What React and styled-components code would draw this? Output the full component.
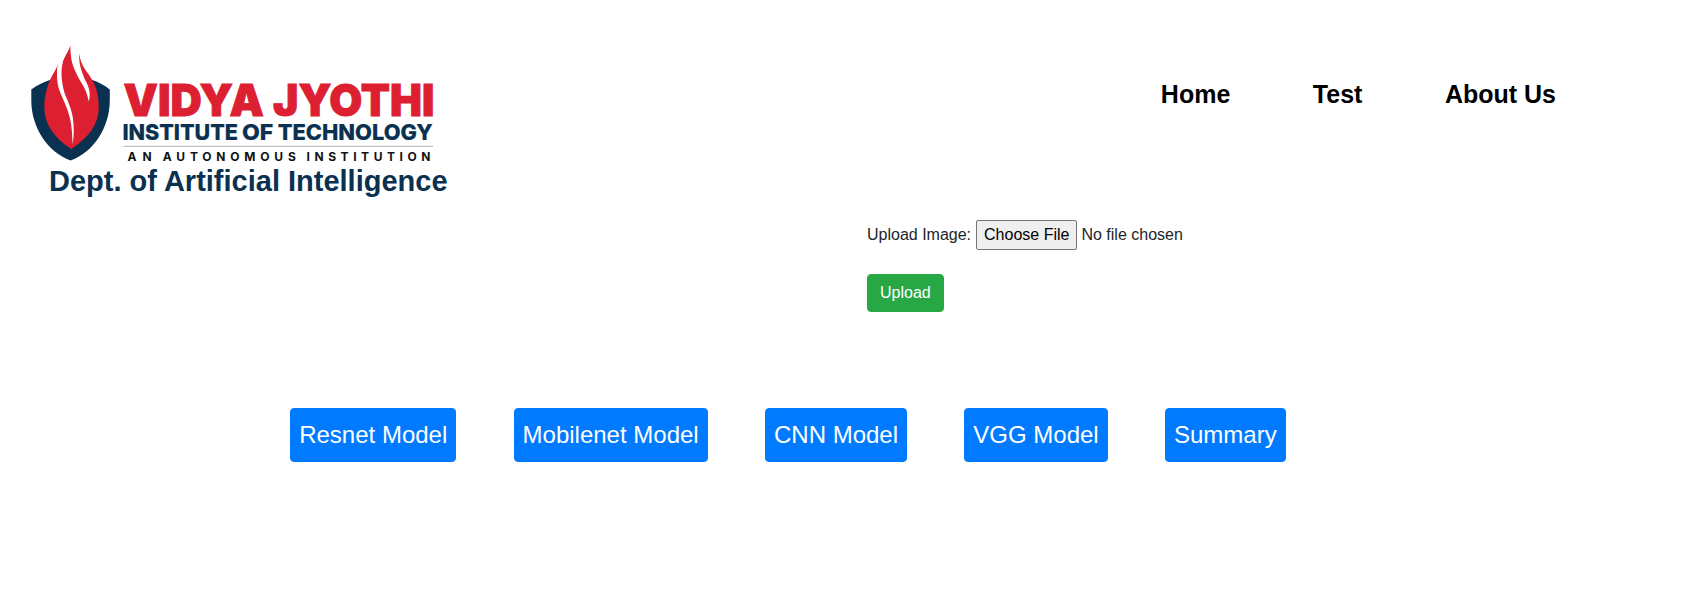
import React from "react";
import styled, { createGlobalStyle } from "styled-components";

const GlobalStyle = createGlobalStyle`
  *, *::before, *::after { box-sizing: border-box; }
  body {
    margin: 0;
    background: #fff;
    color: #212529;
    font: 400 16px/1.5 "Liberation Sans", Arial, sans-serif;
  }
`;

const Header = styled.header`
  display: flex;
  justify-content: space-between;
  align-items: flex-start;
  height: 220px;
  padding: 40px 127px 0 25px;
`;

const Brand = styled.div`
  width: 430px;
`;

const Logo = styled.svg`
  display: block;
  width: 415px;
  height: 125px;
  overflow: visible;
  font-family: Inter, "Liberation Sans", sans-serif;
`;

const Department = styled.h1`
  margin: -2px 0 0 24px;
  font-size: 29px;
  line-height: 36px;
  font-weight: 700;
  color: #0a3150;
  white-space: nowrap;
`;

const Nav = styled.nav`
  display: flex;
  gap: 82.5px;
  padding-top: 35px;
`;

const NavLink = styled.a`
  font-size: 25px;
  line-height: 38px;
  font-weight: 700;
  color: #000;
  text-decoration: none;
`;

const UploadForm = styled.form`
  display: flex;
  flex-direction: column;
  align-items: flex-start;
  gap: 24px;
  margin-left: 867px;
`;

const FileRow = styled.label`
  display: flex;
  align-items: center;
  height: 30px;
`;

const FileInput = styled.input`
  width: 260px;
  height: 30px;
  margin-left: 5px;
  font: inherit;
  color: #212529;

  &::file-selector-button {
    height: 30px;
    margin: 0 4px 0 0;
    padding: 1px 7px;
    border: 1px solid #767676;
    border-radius: 2px;
    background: #efefef;
    color: #000;
    font: inherit;
  }
`;

const Button = styled.button`
  border: 1px solid ${(p) => p.$color};
  border-radius: 4px;
  background: ${(p) => p.$color};
  color: #fff;
  font-family: inherit;
  font-size: ${(p) => (p.$large ? 24 : 16)}px;
  line-height: 1.5;
  padding: ${(p) => (p.$large ? "8px" : "6px 12px")};
  white-space: nowrap;
`;

const Models = styled.section`
  display: flex;
  gap: 57.3px;
  margin: 96px 0 0 290.2px;
`;

const models = ["Resnet Model", "Mobilenet Model", "CNN Model", "VGG Model", "Summary"];

const logoWords = [
  { text: "VIDYA", x: 98.5, y: 76.4, width: 140.5, size: 43.5, weight: 900, fill: "#dc2032", stroke: 0.9 },
  { text: "JYOTHI", x: 248, y: 76.4, width: 161.5, size: 43.5, weight: 900, fill: "#dc2032", stroke: 0.9 },
  { text: "INSTITUTE", x: 97.4, y: 100.2, width: 115.6, size: 22, weight: 800, fill: "#0a3150", stroke: 0.2 },
  { text: "OF", x: 217, y: 100.2, width: 31.3, size: 22, weight: 800, fill: "#0a3150", stroke: 0.2 },
  { text: "TECHNOLOGY", x: 252.7, y: 100.2, width: 155, size: 22, weight: 800, fill: "#0a3150", stroke: 0.2 },
];

const tagline = [
  { text: "AN", x: 102.6, width: 24 },
  { text: "AUTONOMOUS", x: 137.8, width: 133 },
  { text: "INSTITUTION", x: 281.5, width: 124 },
];

function InstituteLogo() {
  return (
    <Logo viewBox="0 0 415 125" role="img" aria-label="Vidya Jyothi Institute of Technology">
      <path
        fill="#0a3150"
        d="M6.3 49.5C12 45.5 18 42 25.5 39.8L66.7 39.8C73 42 79 45 84.8 49.5V61C84.5 87 69 112 45.6 120.5C22 112 6.5 87 6.3 61Z"
      />
      <path
        fill="#dc2032"
        d="M45.3 5.5L54.3 14.3C56 26 61 30 66 38C71 45.5 73.8 55 73.8 68C73.5 85 63 98 46.3 109C29 98 19.3 84 19.3 67C19.3 54 24 41 27.5 35C30 30.5 32 28 32.7 24.3L37.5 23C39 17 44 11 45.3 5.5Z"
      />
      <path
        fill="#fff"
        d="M32.7 23.5C31.5 34 31.7 42 34.3 50C37 58 42 66 45 78.3C47 87 47.2 96 47.6 104.5C49 96 49.3 87 47.7 76.7C45 63 40 57 38.3 48.3C36.2 39 35.8 30 37.8 21.5Z"
      />
      <path
        fill="#fff"
        d="M45.3 5C45.5 18 47 24 50 30.5C52 35 54 39 56.7 43.3C60 48.5 62.5 54 63.7 61.5C65.2 57 65 51 63.3 46.7C61.5 42 60 40 58.7 36.5C55.5 28 53.7 22 54.3 13.5Z"
      />
      {logoWords.map((w) => (
        <text
          key={w.text}
          x={w.x}
          y={w.y}
          fill={w.fill}
          stroke={w.fill}
          strokeWidth={w.stroke}
          fontSize={w.size}
          fontWeight={w.weight}
          textLength={w.width}
          lengthAdjust="spacingAndGlyphs"
        >
          {w.text}
        </text>
      ))}
      <path d="M98.5 106.3H408" stroke="#aeb2b5" />
      {tagline.map((w) => (
        <text key={w.text} x={w.x} y="120.5" fill="#111" fontSize="12" fontWeight="650" textLength={w.width}>
          {w.text}
        </text>
      ))}
    </Logo>
  );
}

export default function App() {
  return (
    <>
      <GlobalStyle />
      <Header>
        <Brand>
          <InstituteLogo />
          <Department>Dept. of Artificial Intelligence</Department>
        </Brand>
        <Nav>
          <NavLink>Home</NavLink>
          <NavLink>Test</NavLink>
          <NavLink>About Us</NavLink>
        </Nav>
      </Header>
      <main>
        <UploadForm>
          <FileRow>
            Upload Image:
            <FileInput type="file" />
          </FileRow>
          <Button type="button" $color="#28a745">Upload</Button>
        </UploadForm>
        <Models>
          {models.map((name) => (
            <Button key={name} $large $color="#007bff">{name}</Button>
          ))}
        </Models>
      </main>
    </>
  );
}
